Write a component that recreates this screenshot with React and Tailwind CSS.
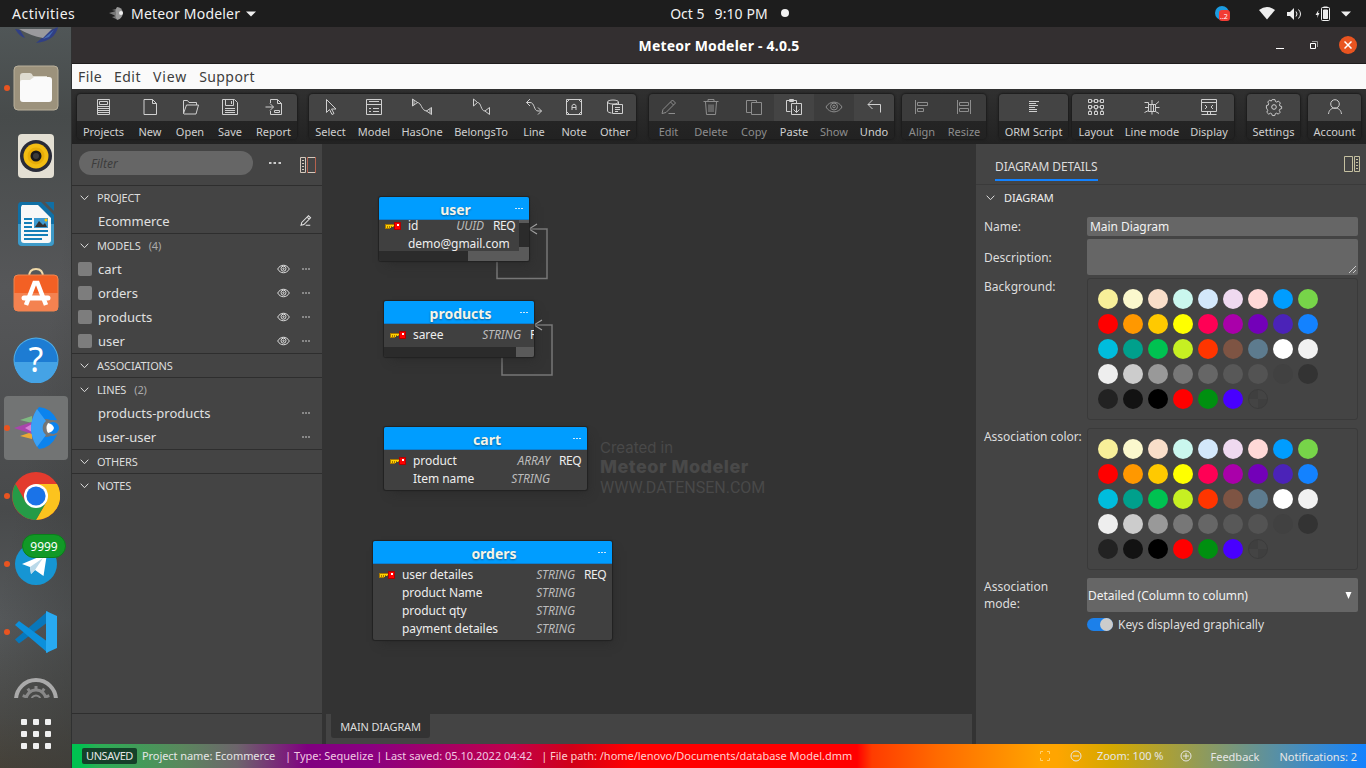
import React from "react";

const Svg = ({ w = 18, h = w, vb, className = "", children, sw = 1 }) => (
  <svg width={w} height={h} viewBox={vb || `0 0 ${w} ${h}`} fill="none" stroke="currentColor" strokeWidth={sw} className={"shrink-0 " + className}>
    {children}
  </svg>
);

const toolIcons = {
  projects: <><path d="M2.500 1.500h12v15h-12zM4.500 3.500h8v3h-8zM3 8.500h11M3 10.500h11M3 12.500h11M3 14.500h11" /></>,
  fresh: <path d="M3 1.500h8.500l4 4v11H3zM11.500 1.500v4h4" />,
  open: <path d="M2.500 15.500v-13h4l1.500 2h7.500v2.500M2.500 15.500l3-8.500h12l-2.500 9H3z" />,
  save: <path d="M1.500 1.500h12l3 3v12h-15zM4.500 1.500v6h8v-6M10.500 3v3M4 10.500h10M4 12.500h10M4 14.500h10" />,
  report: <path d="M5.500 5v-3.500h7l4 4v11h-11v-3.500M12.500 1.500v4h4M0.500 9h8M5 5.500l3.500 3.500-3.500 3.500M9.500 12.500h5v2h-5z" />,
  select: <path d="M4.500 1.500v13l3-3 2.500 5 2-1-2.500-4.500h4.500z" />,
  model: <path d="M1.500 1.500h15v15h-15zM4 3.500h10M1.500 6.500h15M4 10.500h2M8 10.500h6M4 13.500h2M8 13.500h6" />,
  hasone: <path d="M-.5 1v7l5-3.500zM1 2v5M4 4.500c5 0 4 8.500 10 8.500M18.500 9.500v7l-5-3.500zM17 11v4" />,
  belongs: <path d="M1.500 1v7l4-3.500zM5.500 4.500c4 0 3 8.500 7.500 8.500M17.500 9.500v7l-4.500-3.500z" />,
  line: <path d="M1.500 4.500H5c5 0 3.500 8.500 8 8.500h3.500M5 1L1.500 4.500 5 8M13 9.500l3.500 3.500-3.500 3.500" />,
  note: <><path d="M1.500 1.500h15v15h-15zM1.500 4.500l3-3M13.500 1.500l3 3M1.500 13.500l3 3M16.500 13.500l-3 3" /><path d="M7 12V7.500l2-1.500 2 1.500V12M7 9.500h4" /></>,
  other: <><ellipse cx="7" cy="4" rx="5.500" ry="2" /><path d="M1.500 4v9c0 1 2 1.800 4 2M12.500 4v2.500M6.500 6.500h10v9h-10zM9 9.500h5M9 11.500h5M9 13.500h3" /></>,
  edit: <path d="M2 15.500l1-4L12.500 2l3 3L6 14.500zM10.500 4l3 3M8.500 15.500h6.500" />,
  trash: <path d="M1.500 3.500h15M6 3.500v-2h6v2M3.500 4l1 12.500h9l1-12.500M7 6.500v7.500M9 6.500v7.500M11 6.500v7.500" />,
  copy: <path d="M6 14.500H1.500v-12h10v2M6.500 4.500h10v12h-10z" />,
  paste: <path d="M5.500 13.500h-4v-11h10v3M4.500 3.500v-2h4v2zM6.500 5.500h10v11h-10zM11.500 7.500v7M8.500 11.500l3 3 3-3" />,
  eye: <><path d="M1 9c3.500-6.500 12.500-6.500 16 0-3.500 6.500-12.500 6.500-16 0z" /><circle cx="9" cy="8.500" r="3.500" /><circle cx="9" cy="8.500" r="1.300" /></>,
  undo: <path d="M3 6.500h12.500v8M7.500 2L3 6.500 7.500 11" />,
  align: <path d="M2.500 2v14M4.500 4.500h10v3h-10zM4.500 10.500h6v3h-6z" />,
  resize: <path d="M2.500 2v14M15.500 2v14M4.500 4.500h9v3h-9zM4.500 10.500h9v3h-9z" />,
  orm: <path d="M4 3.500h10M4 5.500h7M4 7.500h9M4 9.500h6M4 11.500h8M4 13.500h8" />,
  layout: <path d="M1.500 1.500h3v3h-3zM7.500 1.500h3v3h-3zM13.500 1.500h3v3h-3zM1.500 7.500h3v3h-3zM7.500 7.500h3v3h-3zM13.500 7.500h3v3h-3zM1.500 13.500h3v3h-3zM7.500 13.500h3v3h-3zM13.500 13.500h3v3h-3zM4.500 3h3M10.500 3h3M4.500 9h3M10.500 9h3M3 10.500v3M9 10.500v3M15 10.500v3" />,
  linemode: <><path d="M5.500 6.500h7v7h-7z" /><path d="M1.500 4.500h4v2M16 3.500l-3.500 3M9 2v4.500M2 9.500h3.500M12.500 9.500h4M1.500 14.500l4-2M16 15.500l-3.500-2M9 13.500v3M8 7v6M10.500 7v6" /></>,
  display: <path d="M1.500 1.500h15v12h-15zM1.500 4.500h15M5 7l2 2-2 2M13 7l-2 2 2 2M1.500 16.500h15M7.500 13.500v3M10.500 13.500v3" />,
  settings: <><circle cx="9" cy="9" r="2.300" /><path d="M7.500 2h3l.5 2 1.300.6 1.900-1 2 2-1 1.900.5 1.300 1.800.4v2.300l-1.900.6-.6 1.300 1 1.900-2 2-1.900-1-1.300.6-.5 1.900h-2.600l-.6-1.900-1.300-.6-1.900 1-2-2 1-1.900-.6-1.300L1.500 10.900V8.200l1.900-.4.500-1.400-1-1.900 1.900-1.900 1.800 1z" transform="translate(0 -.3) scale(.95)" /></>,
  account: <><circle cx="9" cy="6" r="4.300" /><path d="M2.500 16c.4-4 3-6 6.500-6s6.100 2 6.500 6" /></>,
};

const groups = [
  ["ml-[5px]", [["Projects", "projects", "w-[53px]"], ["New", "fresh", "w-10"], ["Open", "open", "w-10"], ["Save", "save", "w-10"], ["Report", "report", "w-[47px]"]]],
  ["ml-3", [["Select", "select", "w-[43px]"], ["Model", "model", "w-11"], ["HasOne", "hasone", "w-[52px]"], ["BelongsTo", "belongs", "w-[66px]"], ["Line", "line", "w-10"], ["Note", "note", "w-10"], ["Other", "other", "w-[42px]"]]],
  ["ml-[13px]", [["Edit", "edit", "w-[39px]", 1], ["Delete", "trash", "w-[46px]", 1], ["Copy", "copy", "w-10", 1], ["Paste", "paste", "w-10"], ["Show", "eye", "w-10", 1], ["Undo", "undo", "w-10"]]],
  ["ml-2", [["Align", "align", "w-10", 1], ["Resize", "resize", "w-11", 1]]],
  ["ml-[13px]", [["ORM Script", "orm", "w-[69px]"]]],
  ["ml-1", [["Layout", "layout", "w-12"], ["Line mode", "linemode", "w-16"], ["Display", "display", "w-[50px]"]]],
  ["ml-[13px]", [["Settings", "settings", "w-[53px]"]]],
  ["ml-2", [["Account", "account", "w-[53px]"]]],
];

function Toolbar() {
  return (
    <div className="flex h-[55px] items-start bg-linear-to-b from-[#303030] to-[#222] pt-[5px]">
      {groups.map(([margin, items], i) => (
        <div key={i} className={"flex h-[45px] shrink-0 overflow-hidden rounded-[4px] bg-linear-to-b from-[#282828] to-[#222] shadow-[0_0_2px_1px_#1b1b1b] " + margin}>
          {items.map(([label, icon, width, off]) => (
            <div key={label} className={"flex shrink-0 flex-col items-center " + width + (off ? " text-[#8d8d8d]" : " text-[#d0d0d0]")}>
              <div className={"flex h-[27px] w-full shrink-0 items-start justify-center pt-1 " + (off ? "bg-[#3c3c3c]" : "bg-[#444]")}>
                <Svg className="overflow-visible">{toolIcons[icon]}</Svg>
              </div>
              <span className="whitespace-nowrap pt-[2px] text-[11px] leading-[18px]">{label}</span>
            </div>
          ))}
        </div>
      ))}
    </div>
  );
}

const Chevron = () => <Svg w={9} h={6} className="text-[#ddd]"><path d="M.7.700l3.800 4 3.800-4" /></Svg>;
const Eye = () => (
  <Svg w={13} h={10} className="text-[#ddd]"><path d="M.7 5c2.600-5 9-5 11.600 0-2.600 5-9 5-11.600 0z" /><circle cx="6.500" cy="4.700" r="2.500" /><circle cx="6.500" cy="4.700" r=".7" /></Svg>
);
const Dots = () => <Svg w={8} h={2} className="text-[#ccc]"><path d="M0 1h2M3 1h2M6 1h2" /></Svg>;

function Section({ title, count, children }) {
  return (
    <div>
      <div className="flex h-6 items-center border-t border-[#2e2e2e] pl-2 pt-px text-[11px] tracking-[-0.15px] text-[#ddd]">
        <Chevron />
        <span className="ml-2 pt-px">{title}</span>
        {count && <span className="ml-2 pt-px text-[#aaa]">({count})</span>}
      </div>
      {children}
    </div>
  );
}
const Row = ({ name, model, children }) => (
  <div className="flex h-6 items-center pl-[6px] pr-3 text-[13px] text-[#e0e0e0]">
    <span className={"mr-[6px] size-[14px] rounded-[2px] " + (model ? "bg-[#7d7d7d]" : "")} />
    <span className="flex-1 pt-[2px]">{name}</span>
    {model && <span className="mr-[12px]"><Eye /></span>}
    {children || <Dots />}
  </div>
);

function Sidebar() {
  return (
    <div className="flex w-[250px] shrink-0 flex-col bg-[#444]">
      <div className="flex h-[41px] items-center pl-[7px] pr-[6px]">
        <div className="-mt-[3px] flex h-6 w-[174px] items-center rounded-full bg-[#666] pl-3 pt-px text-[12px] italic text-[#3c3c3c]">Filter</div>
        <Svg w={14} h={4} className="ml-[15px] -mt-[3px] text-[#ccc]"><path d="M1 2h2.500M5.500 2H8M10.500 2H13" strokeWidth="2" /></Svg>
        <Svg w={16} h={16} className="ml-auto text-[#d4c8bc]"><path d="M.5.500h5v15h-5zM7.500.500h8v15h-8zM2 3.500h2M2 6.500h2M2 9.500h2M2 12.500h2" /><path d="M7.500 0v16" stroke="#b5624e" /><path d="M15.500 0v16" stroke="#b5624e" /></Svg>
      </div>
      <Section title="PROJECT">
        <Row name="Ecommerce"><Svg w={12} h={12} vb="1 1 16 17" className="-mr-0.5" sw={1.500}>{toolIcons.edit}</Svg></Row>
      </Section>
      <Section title="MODELS" count={4}>{["cart", "orders", "products", "user"].map((n) => <Row key={n} name={n} model />)}</Section>
      <Section title="ASSOCIATIONS" />
      <Section title="LINES" count={2}>{["products-products", "user-user"].map((n) => <Row key={n} name={n} />)}</Section>
      <Section title="OTHERS" />
      <Section title="NOTES" />
      <div className="mt-auto h-[31px] border-t border-[#2e2e2e]" />
    </div>
  );
}

const Key = () => (
  <svg width="17" height="9" viewBox="0 0 17 9" shapeRendering="crispEdges" className="block">
    <path d="M0 2h10v3H9V5H5v2H0z" fill="#a87800" />
    <path d="M1 3h9v1H8v1H7V4H6v2H5V4H4v2H3V4H2v2H1z" fill="#ffd200" />
    <rect x="9" y="0" width="7" height="8" fill="#b00000" /><rect x="10" y="1" width="5" height="6" fill="#f00" />
    <rect x="12" y="2" width="2" height="2" fill="#fff" />
  </svg>
);

function Node({ place, title, columns, typeWidth, body = "", children }) {
  return (
    <div className={"absolute overflow-hidden rounded-[2px] bg-[#404040] shadow-[0_0_1px_1px_#222,4px_6px_10px_-4px_#2228] " + place}>
      <div className="relative z-10 flex h-[23px] items-center justify-center border-b border-[#0d7fd0] bg-[#009dff] pt-[3px] text-[14px] leading-[20px] font-bold text-[#f4f4e8]">
        <span className="ml-[3px] [text-shadow:0_1px_2px_#0006]">{title}</span>
        <span className="absolute right-[6px] top-[5px]"><Svg w={8} h={14}><path d="M0 6.500h2M3 6.500h2M6 6.500h2" stroke="#cfe8fa" /></Svg></span>
      </div>
      <div className={"pt-[2px] text-[12px] tracking-[-0.06px] text-[#eee] " + body}>
        {columns.map(([name, type, req], i) => (
          <div key={name} className="flex h-[18px] items-center whitespace-nowrap">
            <span className="w-[29px] shrink-0 pl-[6px] pt-px">{i === 0 && <Key />}</span>
            <span>{name}</span>
            <span className={"ml-auto shrink-0 pb-px text-[12px] leading-[17px] italic tracking-[-0.1px] text-[#bbb] " + typeWidth}>{type}</span>
            <span className="ml-[9px] w-[28px] shrink-0 pb-px text-[12px] leading-[17px] tracking-[-0.5px]">{req}</span>
          </div>
        ))}
      </div>
      {children}
    </div>
  );
}

function Canvas() {
  return (
    <div className="relative flex w-[654px] shrink-0 flex-col bg-[#333]">
      <div className="absolute left-[278px] top-[294px] text-[#494949]">
        <div className="font-['Inter','Noto_Sans',sans-serif] text-[15px] leading-[20px]">Created in</div>
        <div className="font-['Inter','Noto_Sans',sans-serif] text-[18px] leading-[18px] font-extrabold tracking-[0.500px]">Meteor Modeler</div>
        <div className="font-['Roboto','Noto_Sans',sans-serif] text-[16px] leading-[23px]">WWW.DATENSEN.COM</div>
      </div>
      <svg className="absolute left-0 top-0" width="300" height="260" fill="none" stroke="#777" strokeWidth="1.500">
        <path d="M175 117v17.500h50V85h-17M180 213v18h50v-50h-17" />
        <path d="M215 80l-8 5 8 5M220 176l-8 5 8 5" stroke="#aaa" strokeWidth="1.200" />
      </svg>
      <Node place="left-[57px] top-[53px] h-[64px] w-[150px]" title="user" typeWidth="text-right" body="-mt-[5px] w-[142px] h-[36px] pt-0 bg-[#404040]"
        columns={[["id", "UUID", "REQ"], ["demo@gmail.com"]]}>
        <div className="flex h-[10px] bg-[#2b2b2b]"><div className="ml-auto w-[61px] bg-[#5a5a5a]" /></div>
        <div className="absolute bottom-0 right-0 flex h-[41px] w-[10px] flex-col bg-[#2b2b2b]"><div className="h-[3px] bg-[#5a5a5a]" /><div className="mt-auto h-[14px] bg-[#5a5a5a]" /></div>
      </Node>
      <Node place="left-[62px] top-[157px] h-[56px] w-[150px]" title="products" typeWidth="" body="h-[23px] w-[174px]" columns={[["saree", "STRING", "REQ"]]}>
        <div className="flex h-[10px] bg-[#2b2b2b]"><div className="ml-auto w-[18px] bg-[#5a5a5a]" /></div>
      </Node>
      <Node place="left-[62px] top-[283px] h-[63px] w-[203px]" title="cart" typeWidth="text-right" columns={[["product", "ARRAY", "REQ"], ["Item name", "STRING"]]} />
      <Node place="left-[51px] top-[397px] h-[99px] w-[239px]" title="orders" typeWidth="text-right"
        columns={[["user detailes", "STRING", "REQ"], ["product Name", "STRING"], ["product qty", "STRING"], ["payment detailes", "STRING"]]} />
      <div className="mt-auto ml-1 mr-1 flex h-[30px] bg-[#444] pl-[5px]">
        <div className="flex h-6 w-[99px] items-center justify-center rounded-b-[3px] bg-[#333] pt-[2px] text-[11px] tracking-[-0.15px] text-[#ddd]">MAIN DIAGRAM</div>
      </div>
    </div>
  );
}

const colors = "#f7ef99 #fbf8cd #f9dec9 #caf7ee #d3e8fb #efd9f0 #ffd9d7 #009dff #77d449 #ff0000 #ff9800 #ffc900 #ffff00 #ff0055 #aa00aa #7300b9 #4b23b8 #1382ff #00bddd #00a08c #00c251 #c6f022 #ff3500 #7e5443 #5d7b8e #ffffff #f1f1f1 #eeeeee #cccccc #999999 #777777 #666666 #585858 #535353 #414141 #333333 #222222 #121212 #000000 #ff0000 #009010 #4800ff".split(" ");

const Palette = () => (
  <div className="h-[142px] w-[271px] rounded-[3px] border border-[#3a3a3a] px-[10px] pt-[10px]">
    <div className="grid w-[225px] grid-cols-9 gap-y-[5px]">
      {colors.map((c, i) => <span key={i} className="size-5 rounded-full" style={{ backgroundColor: c }} />)}
      <span className="size-5 rounded-full border border-[#3b3b3b] bg-[conic-gradient(#444_25%,#3f3f3f_0_50%,#444_0_75%,#3f3f3f_0)]" />
    </div>
  </div>
);

function Details() {
  return (
    <div className="flex flex-1 flex-col bg-[#444] text-[12px] leading-[17px] text-[#ddd]">
      <div className="flex h-[41px] justify-between border-b border-[#3a3a3a] pl-[19px] pr-[6px]">
        <div className="mt-[13px] h-[24px] border-b-2 border-[#1382ff] leading-[20px] tracking-[-0.1px]">DIAGRAM DETAILS</div>
        <Svg w={16} h={16} className="mt-[12px] text-[#c5c0a0]"><path d="M.5.500h8v15h-8zM10.500.500h5v15h-5zM12 3.500h2M12 6.500h2M12 9.500h2M12 12.500h2" /></Svg>
      </div>
      <div className="flex h-[26px] items-center pb-px pl-[10px] text-[11px] tracking-[-0.1px] text-[#eee]"><Chevron /><span className="ml-[9px]">DIAGRAM</span></div>
      <div className="grid grid-cols-[103px_271px] pl-2">
        <span className="pt-[7px]">Name:</span>
        <div className="mt-[6px] flex h-[19px] items-center rounded-[2px] bg-[#666] pl-[3px] tracking-[-0.06px] text-[#f2f2f2]">Main Diagram</div>
        <span className="pt-[13px]">Description:</span>
        <div className="mt-[3px] flex h-9 items-end justify-end rounded-[2px] bg-[#666] p-px"><Svg w={9} h={9} className="text-[#ccc]"><path d="M1 8l7-7M5 8l3-3" /></Svg></div>
        <span className="pt-[3px]">Background:</span>
        <div className="mt-[3px]"><Palette /></div>
        <span className="whitespace-nowrap pt-[8px] tracking-[-0.06px]">Association color:</span>
        <div className="mt-[8px]"><Palette /></div>
        <span className="pr-6 pt-[8px]">Association mode:</span>
        <div className="mt-[8px] flex h-[34px] items-center justify-between rounded-[2px] bg-[#666] pl-px pr-[6px] tracking-[-0.05px] text-[#f2f2f2]">
          <span>Detailed (Column to column)</span><svg width="7" height="7" fill="#fff"><path d="M.5 0h6l-3 7z" /></svg>
        </div>
        <span />
        <div className="mt-1 flex items-center tracking-[-0.05px]">
          <span className="mr-[5px] flex h-[13px] w-[26px] justify-end rounded-full bg-[#1c80ea]"><span className="size-[13px] rounded-full bg-[#ccc]" /></span>
          Keys displayed graphically
        </div>
      </div>
    </div>
  );
}

const ZoomGlyph = ({ plus }) => <Svg w={12}><circle cx="6" cy="6" r="5" /><path d={plus ? "M3 6h6M6 3v6" : "M3 6h6"} /></Svg>;

function StatusBar() {
  return (
    <div className="flex h-6 items-center whitespace-nowrap bg-[linear-gradient(90deg,#00c251_0,#00c251_8px,#2aaf55_25px,#5a875d_110px,#6d656c_165px,#800080_235px,#8a0080_300px,#c0004a_440px,#d00018_500px,#ff0000_560px,#ff0000_785px,#ff3c00_800px,#ff6a00_865px,#ffa500_970px,#ffa500_985px,#d4a800_1040px,#1382ff_1294px)] pl-[10px] pr-[9px] text-[11px] text-[#e6e6e6]">
      <span className="flex h-4 w-[55px] items-center justify-center rounded-[2px] bg-[#15402a] tracking-[-0.4px]">UNSAVED</span>
      <span className="ml-[5px] tracking-[-0.07px]">Project name: Ecommerce</span>
      <span className="ml-[10px] text-[#f1c8e2]">| Type: Sequelize | Last saved: 05.10.2022 04:42</span>
      <span className="ml-[9px] tracking-[-0.02px] text-[#ffd0d0]">| File path: /home/lenovo/Documents/database Model.dmm</span>
      <Svg w={12} className="ml-auto text-[#ffd070]"><path d="M1.500 4V1.500H4M8 1.500h2.500V4M10.500 8v2.500H8M4 10.500H1.500V8" /></Svg>
      <span className="ml-[19px]"><ZoomGlyph /></span>
      <span className="ml-[15px]">Zoom: 100 %</span>
      <span className="ml-[17px]"><ZoomGlyph plus /></span>
      <span className="ml-[18px] pt-[2px]">Feedback</span>
      <span className="ml-5 pt-[2px]">Notifications: 2</span>
    </div>
  );
}

const gear = Array.from({ length: 10 }, (_, i) => i * 36);
const dock = [
  [1, <Svg w={46} key="f"><rect x="1" y="1" width="44" height="44" rx="4" fill="#9c927c" stroke="#b9b09b" /><path d="M7 11q0-3 3-3h7q2 0 3 3h14v8H7z" fill="#dedbd0" stroke="none" /><path d="M7 17q0-2 2-2h8l4-3h15q3 0 3 3v19q0 3-3 3H10q-3 0-3-3z" fill="#fafafa" stroke="none" /></Svg>],
  [0, <Svg w={46} key="r" sw={0}><rect x="5" y="1" width="36" height="44" rx="4" fill="#e3dfd3" /><circle cx="23" cy="23" r="16" fill="#292b38" /><circle cx="23" cy="23" r="12.500" fill="#f3bd13" /><circle cx="23" cy="23" r="8.500" fill="#e8ad08" /><circle cx="23" cy="23" r="5.500" fill="#191919" /><circle cx="23" cy="23" r="3" fill="#3b3b3b" /></Svg>],
  [0, <Svg w={46} key="w" sw={0}><path d="M8 1h20l13 13v27q0 4-4 4H9q-4 0-4-4V5q0-4 3-4z" fill="#106fa5" /><path d="M5 23h36v18q0 4-4 4H9q-4 0-4-4z" fill="#3e9ac8" /><path d="M9 4h16l13 13v22q0 3-3 3H11q-3 0-3-3V6z" fill="#f8f8f8" /><path d="M32 1h9v9z" fill="#106fa5" /><path d="M11 18h8M11 22h8M11 26h8M11 30h24M11 34h24M11 38h18" stroke="#147eb8" strokeWidth="2" /><path d="M21 17h14v10H21z" fill="#3d9bd2" /><path d="M22 26l4-6 4 4 2-2 2 4z" fill="#333" /><circle cx="33" cy="19" r="1.500" fill="#ffc400" /></Svg>],
  [0, <Svg w={46} key="a" className="overflow-visible"><path d="M16 8q0-8 7-8t7 8" stroke="#f0d9a8" strokeWidth="2" /><rect x="1" y="6" width="44" height="36" rx="4" fill="#f36024" stroke="#ef854f" /><path d="M1 24h44v14q0 4-4 4H5q-4 0-4-4z" fill="#f48250" stroke="none" /><path d="M13 36L21.500 14h3L33 36" stroke="#fff" strokeWidth="4.500" /><path d="M11 29h24" stroke="#fff" strokeWidth="5" strokeLinecap="round" /></Svg>],
  [0, <Svg w={46} key="h" sw={0}><circle cx="23" cy="23" r="22.500" fill="#51aee6" /><circle cx="23" cy="23" r="21.500" fill="#1d7cd3" /><path d="M1.500 25h43A21.500 21.500 0 0 1 1.500 25z" fill="#45a3e5" /><text x="23" y="35" textAnchor="middle" fontSize="34" fill="#fff">?</text></Svg>],
  [1, <Svg w={46} key="m" sw={0}><path d="M7 15l12-4v7z" fill="#7fb981" /><path d="M7 31l12-4v7z" fill="#eba935" /><path d="M1 23l18-6v12z" fill="#a945ac" /><path d="M12 23l7-4v8z" fill="#d681d6" /><path d="M26 2Q38 3 44 15l-5 1a9 9 0 1 0 0 14l5 0Q38 43 26 44 19 36 18 23 19 10 26 2z" fill="#0b83ee" /><path d="M24 4l9 12a9 9 0 0 0 0 14L24 42Q12 23 24 4z" fill="#3ba0f5" /><circle cx="39" cy="23" r="8" fill="#777" /><circle cx="40" cy="23" r="6" fill="#0b83ee" /><path d="M35 18q5 1 6 5-1 4-6 5-3-5 0-10z" fill="#fff" /></Svg>],
  [1, <Svg w={48} key="c" sw={0}><circle cx="24" cy="24" r="24" fill="#e33b2e" /><path d="M24 12h21a24 24 0 0 1-21 36l10.400-18z" fill="#fcc31e" /><path d="M3.500 12A24 24 0 0 0 24 48l10.400-18-20.800 0z" fill="#259b47" /><circle cx="24" cy="24" r="12" fill="#fff" /><circle cx="24" cy="24" r="9.600" fill="#1a73e8" /></Svg>],
  [1, <Svg w={46} key="t" sw={0}><circle cx="23" cy="23" r="21" fill="#1695d3" /><path d="M9 23L34 12.500 30.500 35 22 29l-4 4-1-7z" fill="#fff" /><path d="M17 26l13-9-8 12-4 4z" fill="#bad9e9" /></Svg>],
  [1, <Svg w={46} key="v" sw={0}><path d="M2 30.500l4 4L35 13V2z" fill="#0877bb" /><path d="M2 16l4-4 29 21v11z" fill="#0c90dc" /><path d="M33 2l11 5v32l-11 5z" fill="#28aaf2" /></Svg>],
];

function Dock() {
  return (
    <div className="flex w-[72px] shrink-0 flex-col overflow-hidden border-r border-[#303131] bg-[linear-gradient(100deg,#50565800_50%,#3a3b3a88),linear-gradient(180deg,#505657,#474b4b_12%,#565759_35%,#484a4b_65%,#55585a_80%,#4b4b48_93%,#474238)]">
      <div className="h-[27px] pl-3">
        <Svg w={50} h={18} sw={0}><path d="M3 2q5 8 10 9L8 3zM24 16Q43 14 46 0l-9 4-6 6z" fill="#303f85" /><path d="M7 2h33l-9 9q-12-2-24-9z" fill="#9a9a9d" /><path d="M31 12l11-9-5 7z" fill="#466eb6" /></Svg>
      </div>
      {dock.map(([running, icon], i) => (
        <div key={i} className="relative flex h-[68px] shrink-0 items-center pl-1">
          <span className={"absolute left-[4px] z-10 size-[6px] rounded-full " + (running ? "bg-[#e95420]" : "")} />
          <div className={"flex size-16 items-center justify-center rounded-[4px] " + (i === 5 ? "bg-[#727474]" : "")}>{icon}</div>
          {i === 7 && <span className="absolute left-[22px] top-[4px] flex h-6 w-[44px] items-center justify-center rounded-full border border-[#0b7d1b] bg-[#119926] pt-px text-[12px] text-white">9999</span>}
        </div>
      ))}
      <div className="h-[34px] shrink-0 overflow-hidden pl-[13px] pt-[12px]">
        <svg width="46" height="20" viewBox="0 0 46 20" fill="none">
          <circle cx="23" cy="22" r="20" stroke="#aaa" strokeWidth="4" />
          <circle cx="23" cy="22" r="10" stroke="#888" strokeWidth="3" /><circle cx="23" cy="22" r="4.500" stroke="#888" strokeWidth="2" />
          {gear.map((a) => <path key={a} d="M23 8v4" stroke="#888" strokeWidth="3" transform={`rotate(${a} 23 22)`} />)}
        </svg>
      </div>
      <div className="ml-[21px] mt-[19px] grid w-[30px] grid-cols-3 gap-[6px]">
        {gear.slice(0, 9).map((g) => <span key={g} className="size-[6px] rounded-[1px] bg-[#f0f0f0]" />)}
      </div>
    </div>
  );
}

function TopBar() {
  return (
    <div className="grid h-[27px] grid-cols-[1fr_auto_1fr] items-center bg-[#1d1d1d] text-[14px] text-[#f2f2f2]">
      <div className="flex items-center pl-3">
        <span className="w-[63px] tracking-[0.500px]">Activities</span>
        <Svg w={16} h={15} className="ml-[34px]" sw={0}><path d="M8 1q5 0 6 6-1 6-6 7-5-6 0-13z" fill="#999" /><path d="M0 7l7-2v5zM3 4l4-1v2zM3 11l4-1v3z" fill="#777" /><circle cx="12" cy="7" r="2" fill="#eee" /></Svg>
        <span className="ml-[6px] tracking-[0.200px]">Meteor Modeler</span>
        <svg width="10" height="6" className="ml-[6px]" fill="#eee"><path d="M0 .5h10l-5 5z" /></svg>
      </div>
      <div className="flex items-center pb-px pl-[93px] text-[14px]"><span>Oct 5</span><span className="ml-[10px] tracking-[0.100px]">9:10 PM</span><span className="ml-[13px] size-2 rounded-full bg-[#f2f2f2]" /></div>
      <div className="flex items-center justify-end pr-[15px]">
        <Svg w={16} sw={0}><circle cx="7" cy="7" r="7" fill="#1b9be0" /><rect x="4" y="4" width="11" height="11" rx="3" fill="#f23c34" /><text x="5" y="13" fontSize="7" fill="#fff">..2</text></Svg>
        <svg width="16" height="13" className="ml-7" fill="#eee"><path d="M0 3q8-6 16 0L8 12.500z" /></svg>
        <Svg w={15} h={14} className="ml-3"><path d="M0 5h3l4-4v12L3 9H0z" fill="#eee" stroke="none" /><path d="M9 4.500q2 2.500 0 5M11.500 2.500q4 4.500 0 9" /></Svg>
        <Svg w={15} h={15} className="ml-[13px]"><path d="M3.500 4L.5 9h2l-.5 3L4.500 7H3z" fill="#eee" stroke="none" /><rect x="6.500" y="1.500" width="8" height="13" rx="1" /><path d="M8.500 4h4v8.500h-4zM8.500 1h4" fill="#eee" /></Svg>
        <svg width="10" height="6" className="ml-[11px]" fill="#eee"><path d="M0 .5h10l-5 5z" /></svg>
      </div>
    </div>
  );
}

export default function App() {
  return (
    <div className="flex h-[768px] w-[1366px] flex-col overflow-hidden bg-[#333] font-['Noto_Sans','Open_Sans',sans-serif] leading-normal">
      <TopBar />
      <div className="flex h-[741px]">
        <Dock />
        <div className="flex w-[1294px] flex-col">
          <div className="grid h-[37px] grid-cols-[1fr_auto_1fr] items-center border-b border-[#1f1d1d] bg-[#332f30] text-white">
            <span />
            <span className="text-[14px] font-bold tracking-[0.220px]">Meteor Modeler - 4.0.5</span>
            <div className="flex items-center justify-end pr-[9px]">
              <Svg w={8} h={10} className="mr-[26px]"><path d="M0 8.500h8" /></Svg>
              <Svg w={8} h={8} className="mr-[21px]"><path d="M.5 2.500h5v5h-5z" /><path d="M2 .5h5.500V6" stroke="#999" /></Svg>
              <span className="flex size-[18px] items-center justify-center rounded-full bg-[#e95420]"><Svg w={8} sw={1.500}><path d="M.5.500l7 7M7.500.500l-7 7" /></Svg></span>
            </div>
          </div>
          <div className="flex h-[25px] shrink-0 items-center gap-3 bg-[#fafafa] pl-[6px] text-[14px] tracking-[0.430px] text-[#3d3d3d]">
            <span>File</span><span>Edit</span><span className="tracking-[0.900px]">View</span><span>Support</span>
          </div>
          <Toolbar />
          <div className="flex h-[600px]"><Sidebar /><Canvas /><Details /></div>
          <StatusBar />
        </div>
      </div>
    </div>
  );
}
